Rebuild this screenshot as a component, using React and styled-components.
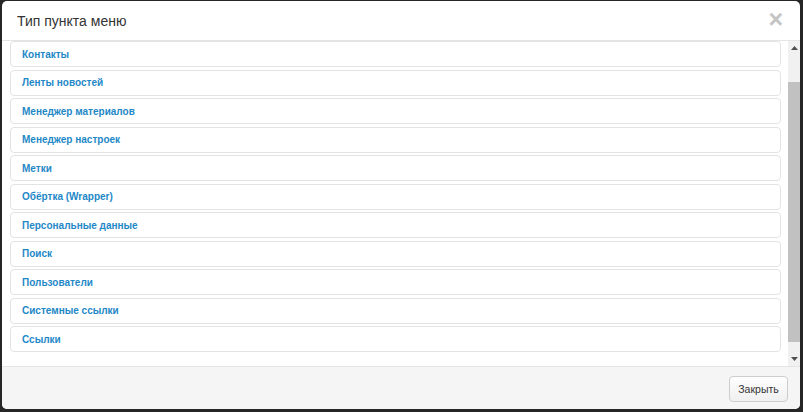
import React from "react";
import styled, { createGlobalStyle } from "styled-components";

const Global = createGlobalStyle`
  html, body { margin: 0; padding: 0; }
  body {
    background: #262626;
    font-family: "Liberation Sans", Arial, sans-serif;
    width: 803px;
    height: 412px;
    overflow: hidden;
  }
`;

const Frame = styled.div`
  padding: 1px 3px 3px 2px;
  height: 412px;
  box-sizing: border-box;
`;

const Modal = styled.div`
  background: #fff;
  border-radius: 5px;
  height: 408px;
  display: flex;
  flex-direction: column;
  overflow: hidden;
`;

const Header = styled.div`
  height: 39px;
  border-bottom: 1px solid #e5e5e5;
  display: flex;
  align-items: center;
  justify-content: space-between;
  padding: 0 17px 0 15px;
  flex-shrink: 0;
`;

const Title = styled.h3`
  margin: 0;
  font-weight: normal;
  font-size: 14px;
  color: #333;
`;

const Close = styled.span`
  font-size: 25px;
  font-weight: bold;
  color: #c4c4c4;
  line-height: 1;
  margin-top: -2px;
`;

const Body = styled.div`
  height: 325px;
  display: flex;
  flex-shrink: 0;
`;

const List = styled.div`
  flex: 1;
  padding: 0 7px 0 8px;
  display: flex;
  flex-direction: column;
  gap: 2.5px;
`;

const Row = styled.div`
  height: 24px;
  border: 1px solid #e3e3e3;
  border-radius: 4px;
  display: flex;
  align-items: center;
  padding-left: 11px;
  font-size: 10px;
  font-weight: bold;
  color: #1e88c7;
`;

const ScrollBar = styled.div`
  width: 12px;
  background: #f1f1f1;
  display: flex;
  flex-direction: column;
  align-items: center;
`;

const Arrow = styled.div`
  height: 14px;
  width: 12px;
  display: flex;
  align-items: center;
  justify-content: center;
`;

const Track = styled.div`
  flex: 1;
  width: 100%;
  display: flex;
  flex-direction: column;
  padding: ${(p) => p.$before}px 0 ${(p) => p.$after}px;
  box-sizing: border-box;
`;

const Thumb = styled.div`
  flex: 1;
  background: #c1c1c1;
`;

const Footer = styled.div`
  flex: 1;
  background: #f5f5f5;
  border-top: 1px solid #e5e5e5;
  display: flex;
  align-items: center;
  justify-content: flex-end;
  padding: 0 12px 0 0;
`;

const Button = styled.button`
  width: 59px;
  height: 26px;
  border: 1px solid #cdcdcd;
  border-radius: 4px;
  background: linear-gradient(#fefefe, #f0f0f0);
  font-family: "Liberation Sans", Arial, sans-serif;
  font-size: 10.5px;
  color: #333;
  padding: 0;
  margin-top: 1px;
`;

const items = [
  "Контакты",
  "Ленты новостей",
  "Менеджер материалов",
  "Менеджер настроек",
  "Метки",
  "Обёртка (Wrapper)",
  "Персональные данные",
  "Поиск",
  "Пользователи",
  "Системные ссылки",
  "Ссылки",
];

const Tri = ({ down }) => (
  <svg width="7" height="4" viewBox="0 0 7 4">
    <path d={down ? "M0 0 L7 0 L3.5 4 Z" : "M0 4 L7 4 L3.5 0 Z"} fill="#505050" />
  </svg>
);

export default function App() {
  return (
    <>
      <Global />
      <Frame>
        <Modal>
          <Header>
            <Title>Тип пункта меню</Title>
            <Close>×</Close>
          </Header>
          <Body>
            <List>
              {items.map((t) => (
                <Row key={t}>{t}</Row>
              ))}
            </List>
            <ScrollBar>
              <Arrow>
                <Tri />
              </Arrow>
              <Track $before={27} $after={10}>
                <Thumb />
              </Track>
              <Arrow>
                <Tri down />
              </Arrow>
            </ScrollBar>
          </Body>
          <Footer>
            <Button>Закрыть</Button>
          </Footer>
        </Modal>
      </Frame>
    </>
  );
}
